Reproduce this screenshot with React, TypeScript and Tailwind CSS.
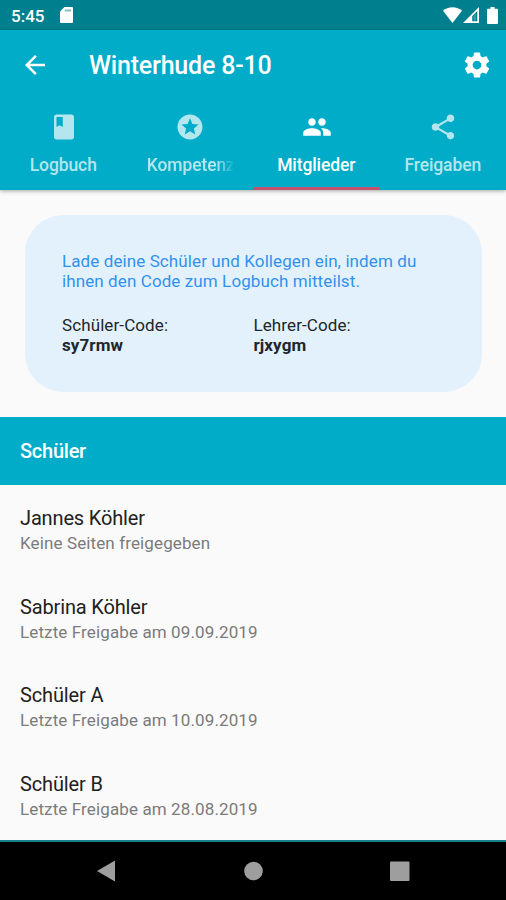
import { MdArrowBack, MdBook, MdGroup, MdShare, MdStars } from 'react-icons/md';
import type { IconType } from 'react-icons';

interface Tab {
  label: string;
  icon: IconType;
  active?: boolean;
  faded?: boolean;
}

const tabs: Tab[] = [
  { label: 'Logbuch', icon: MdBook },
  { label: 'Kompetenz', icon: MdStars, faded: true },
  { label: 'Mitglieder', icon: MdGroup, active: true },
  { label: 'Freigaben', icon: MdShare },
];

const members = [
  { name: 'Jannes Köhler', status: 'Keine Seiten freigegeben' },
  { name: 'Sabrina Köhler', status: 'Letzte Freigabe am 09.09.2019' },
  { name: 'Schüler A', status: 'Letzte Freigabe am 10.09.2019' },
  { name: 'Schüler B', status: 'Letzte Freigabe am 28.08.2019' },
];

const GearIcon = () => (
  <svg className="ml-auto size-[30px]" viewBox="0 0 24 24" fill="currentColor">
    <path d="M19.43 12.98c.04-.32.07-.64.07-.98s-.03-.66-.07-.98l2.11-1.65c.19-.15.24-.42.12-.64l-2-3.46c-.12-.22-.39-.3-.61-.22l-2.49 1c-.52-.4-1.08-.73-1.69-.98l-.38-2.65C14.46 2.18 14.25 2 14 2h-4c-.25 0-.46.18-.49.42l-.38 2.65c-.61.25-1.17.59-1.69.98l-2.49-1c-.23-.09-.49 0-.61.22l-2 3.46c-.13.22-.07.49.12.64l2.11 1.65c-.04.32-.07.65-.07.98s.03.66.07.98l-2.11 1.65c-.19.15-.24.42-.12.64l2 3.46c.12.22.39.3.61.22l2.49-1c.52.4 1.08.73 1.69.98l.38 2.65c.03.24.24.42.49.42h4c.25 0 .46-.18.49-.42l.38-2.65c.61-.25 1.17-.59 1.69-.98l2.49 1c.23.09.49 0 .61-.22l2-3.46c.12-.22.07-.49-.12-.64l-2.11-1.65zM12 15.5c-1.93 0-3.5-1.57-3.5-3.5s1.57-3.5 3.5-3.5 3.5 1.57 3.5 3.5-1.57 3.5-3.5 3.5z" />
  </svg>
);

const StatusBar = () => (
  <div className="flex h-[30px] shrink-0 items-center bg-[#00808e] pl-[11px] pr-2 text-white">
    <span className="mt-px text-[17px] font-medium leading-5">5:45</span>
    <svg className="ml-4 h-4 w-[13px]" viewBox="0 0 13 16" fill="currentColor">
      <path d="M4.5 0H12a1 1 0 0 1 1 1v14a1 1 0 0 1-1 1H1a1 1 0 0 1-1-1V4.5z" />
      <path d="M5 2.5h6v2H4.500z" fill="#00808e" opacity=".5" />
    </svg>
    <svg className="ml-auto h-4 w-[19px]" viewBox="0 0 19 16" fill="currentColor">
      <path d="M9.5 16 0 3.7C2.5 1.5 5.8.2 9.5.2S16.5 1.5 19 3.7z" />
    </svg>
    <svg className="ml-[1px] h-4 w-4" viewBox="0 0 16 16" fill="none">
      <path fill="currentColor" fillRule="evenodd" d="M16 0v16H0zM14.3 4 9.2 9.1v5.2h5.1z" />
      <path fill="currentColor" d="M10.5 8.8 13 6.3v7.2h-2.5z" opacity=".2" />
    </svg>
    <svg className="ml-2 h-[17px] w-[11px]" viewBox="0 0 11 17" fill="currentColor">
      <path d="M3.5 0h4v1.8H10a1 1 0 0 1 1 1V16a1 1 0 0 1-1 1H1a1 1 0 0 1-1-1V2.8a1 1 0 0 1 1-1h2.5z" />
    </svg>
  </div>
);

const TabBar = () => (
  <nav className="grid h-[89px] grid-cols-4">
    {tabs.map(({ label, icon: Icon, active, faded }) => (
      <button
        key={label}
        className={`flex min-w-0 flex-col items-center border-b-[3px] pt-[11px] ${
          active ? 'border-[#c4506c] text-white' : 'border-transparent text-[#b3e6ee]'
        }`}
      >
        <Icon className="ml-px size-[30px]" />
        <span
          className={`mt-3 w-[86px] whitespace-nowrap text-[17.5px] font-medium leading-[22px] tracking-[-0.1px] ${
            faded
              ? 'text-left [mask-image:linear-gradient(to_right,black_80%,transparent_102%)]'
              : 'flex justify-center'
          }`}
        >
          {label}
        </span>
      </button>
    ))}
  </nav>
);

const InviteCard = () => (
  <section className="ml-[25px] mr-6 mt-[25px] h-[177px] rounded-[38px] bg-[#e3f1fd] px-[37px] pt-[37px] text-[17px] leading-[19.5px] tracking-[0.1px]">
    <p className="whitespace-nowrap text-[#3192ee]">
      Lade deine Schüler und Kollegen ein, indem du
      <br />
      ihnen den Code zum Logbuch mitteilst.
    </p>
    <div className="mt-[25px] grid grid-cols-2 text-[#20262b]">
      <div>
        <p>Schüler-Code:</p>
        <p className="font-bold">sy7rmw</p>
      </div>
      <div>
        <p>Lehrer-Code:</p>
        <p className="font-bold">rjxygm</p>
      </div>
    </div>
  </section>
);

const NavigationBar = () => (
  <footer className="flex h-[60px] shrink-0 border-t-2 border-[#16828c] bg-black">
    <svg className="h-[58px] w-full" viewBox="0 0 506 58" fill="#9e9e9e">
      <path d="M97 29 115 18.5v21z" />
      <circle cx="253.5" cy="29" r="9.3" />
      <rect x="390" y="19.5" width="19.5" height="19.5" rx="1" />
    </svg>
  </footer>
);

export default function App() {
  return (
    <div className="flex h-[900px] w-[506px] flex-col overflow-hidden bg-[#fafafa] font-['Roboto',sans-serif]">
      <StatusBar />
      <header className="relative shrink-0 bg-[#00acc7] shadow-[0_1px_4px_rgba(0,0,0,0.35)]">
        <div className="flex h-[71px] items-center pb-[2px] pl-5 pr-[14px] text-white">
          <MdArrowBack className="size-[30px]" />
          <h1 className="ml-[39px] mt-[2px] text-[25px] font-medium leading-[30px] tracking-[-0.2px]">
            Winterhude 8-10
          </h1>
          <GearIcon />
        </div>
        <TabBar />
      </header>

      <main className="min-h-0 flex-1 overflow-hidden">
        <InviteCard />
        <h2 className="mt-[25px] flex h-[68px] items-center bg-[#00acc7] pl-5 text-[20px] font-medium tracking-[-0.25px] text-white">
          Schüler
        </h2>
        <ul>
          {members.map((member) => (
            <li key={member.name} className="h-[88.6px] pl-5 pt-[21px]">
              <p className="text-[20px] leading-6 tracking-[-0.15px] text-[#212121]">{member.name}</p>
              <p className="mt-[2px] text-[17px] leading-[22px] tracking-[0.12px] text-[#7b7b7b]">{member.status}</p>
            </li>
          ))}
        </ul>
      </main>
      <NavigationBar />
    </div>
  );
}
